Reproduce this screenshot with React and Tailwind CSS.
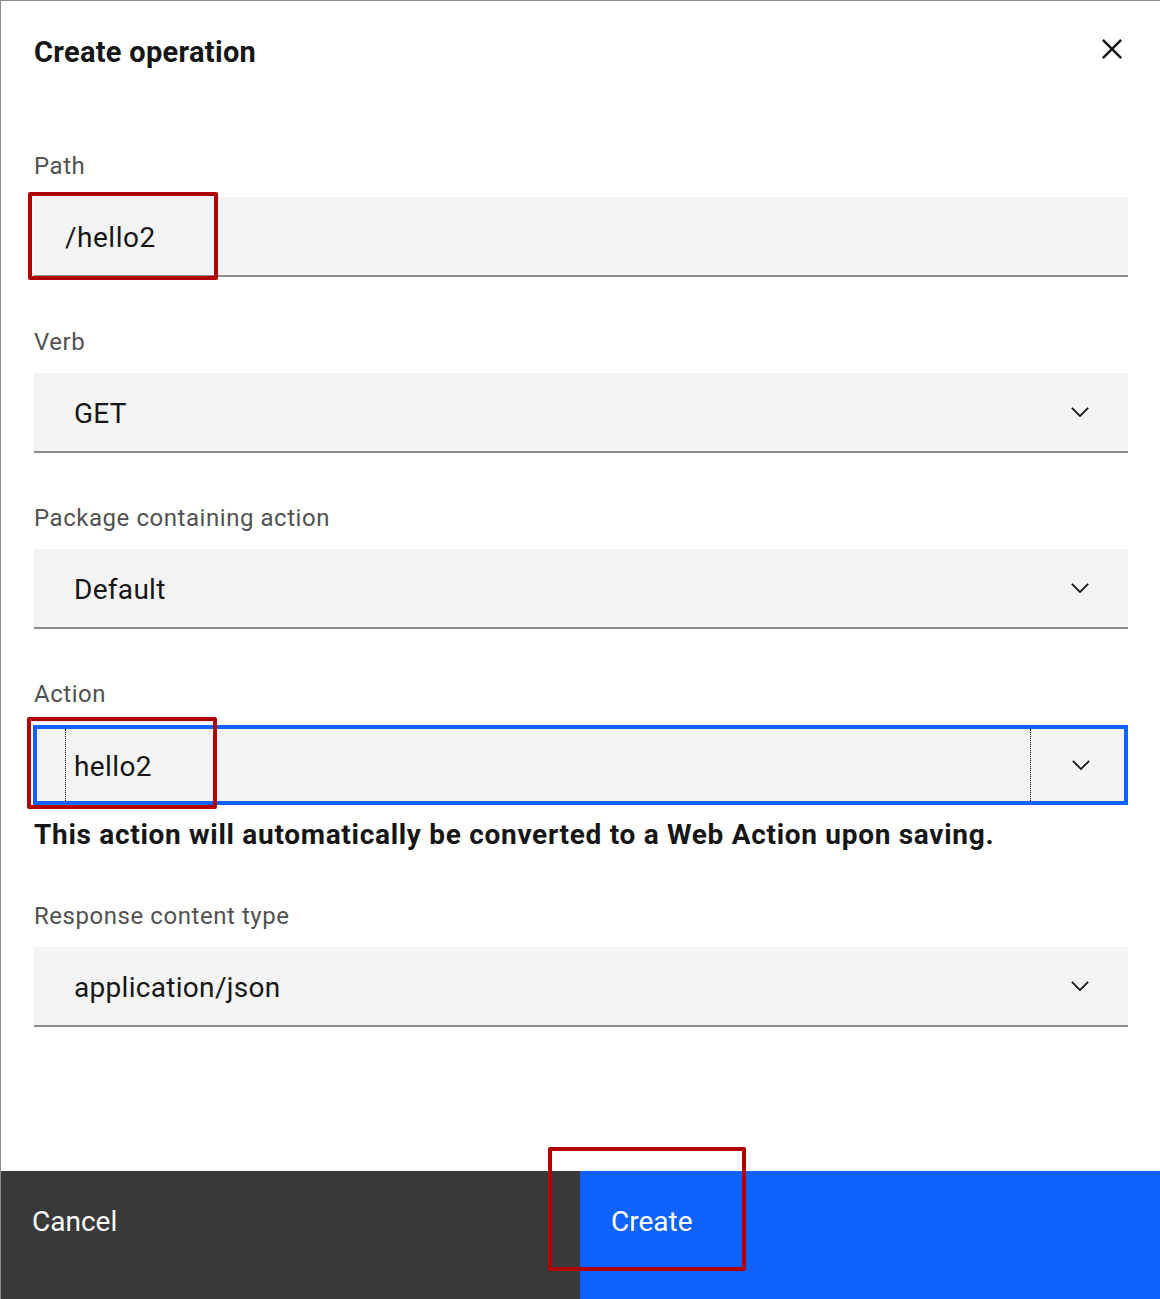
import React from "react";

const Chevron = () => (
  <svg width="28" height="28" viewBox="0 0 16 16" fill="#161616" aria-hidden="true">
    <path d="M8 11L3 6 3.7 5.3 8 9.6 12.3 5.3 13 6z" />
  </svg>
);

const Label = ({ children }) => (
  <div className="text-[24px] leading-[24px] tracking-[0.55px] text-[#525252] mb-[19px]">{children}</div>
);

const SelectField = ({ label, value, className = "" }) => (
  <div className={className}>
    <Label>{label}</Label>
    <div className="h-[80px] bg-[#f4f4f4] border-b-2 border-[#8d8d8d] flex items-center justify-between pl-[40px] pr-[34px]">
      <span className="text-[28px] tracking-[0.3px] text-[#161616] pt-[3px]">{value}</span>
      <Chevron />
    </div>
  </div>
);

export default function App() {
  return (
    <div
      className="w-[1160px] h-[1299px] bg-white border-t border-l border-[#8d8d8d] flex flex-col relative overflow-hidden"
      style={{ fontFamily: "Roboto, 'Noto Sans', sans-serif" }}
    >
      <div className="flex items-start justify-between pl-[33px] pr-[28px] pt-[28px]">
        <h2 className="mt-[5px] text-[29px] leading-[36px] tracking-[0.3px] font-bold text-[#161616]">Create operation</h2>
        <svg width="40" height="40" viewBox="0 0 32 32" fill="#161616" aria-hidden="true">
          <path d="M17.4141 16L24 9.4141 22.5859 8 16 14.5859 9.4143 8 8 9.4141 14.5859 16 8 22.5859 9.4143 24 16 17.4141 22.5859 24 24 22.5859 17.4141 16z" />
        </svg>
      </div>

      <div className="pl-[33px] pr-[32px] flex flex-col">
        <div className="mt-[84px]">
          <Label>Path</Label>
          <div className="h-[80px] bg-[#f4f4f4] border-b-2 border-[#8d8d8d] flex items-center pl-[31px]">
            <span className="text-[28px] tracking-[0.5px] text-[#161616] pt-[3px]">/hello2</span>
          </div>
        </div>

        <SelectField className="mt-[53px]" label="Verb" value="GET" />
        <SelectField className="mt-[53px]" label="Package containing action" value="Default" />

        <div className="mt-[53px]">
          <Label>Action</Label>
          <div className="h-[80px] bg-[#f4f4f4] border-[4px] border-[#0f62fe] flex items-stretch -ml-px">
            <div className="w-[28px]" />
            <div className="flex-1 border-l border-dotted border-black flex items-center pl-[8px]">
              <span className="text-[28px] tracking-[0.4px] text-[#161616] pt-[3px]">hello2</span>
            </div>
            <div className="w-[94px] border-l border-dotted border-black flex items-center justify-center pl-[6px]">
              <Chevron />
            </div>
          </div>
          <div className="mt-[14px] text-[28px] leading-[32px] tracking-[0.7px] font-bold text-[#161616]">
            This action will automatically be converted to a Web Action upon saving.
          </div>
        </div>

        <SelectField className="mt-[53px]" label="Response content type" value="application/json" />
      </div>

      <div className="mt-auto h-[128px] flex">
        <div className="w-[579px] bg-[#393939] text-white text-[28px] leading-[32px] pl-[31px] pt-[35px]">Cancel</div>
        <div className="flex-1 bg-[#0f62fe] text-white text-[28px] leading-[32px] pl-[31px] pt-[35px]">Create</div>
      </div>

      <div className="absolute left-[27px] top-[191px] w-[190px] h-[88px] border-[4px] border-[#b00000] rounded-[2px]" />
      <div className="absolute left-[26px] top-[716px] w-[190px] h-[92px] border-[4px] border-[#b00000] rounded-[2px]" />
      <div className="absolute left-[547px] top-[1146px] w-[198px] h-[124px] border-[4px] border-[#b00000] rounded-[2px]" />
    </div>
  );
}
